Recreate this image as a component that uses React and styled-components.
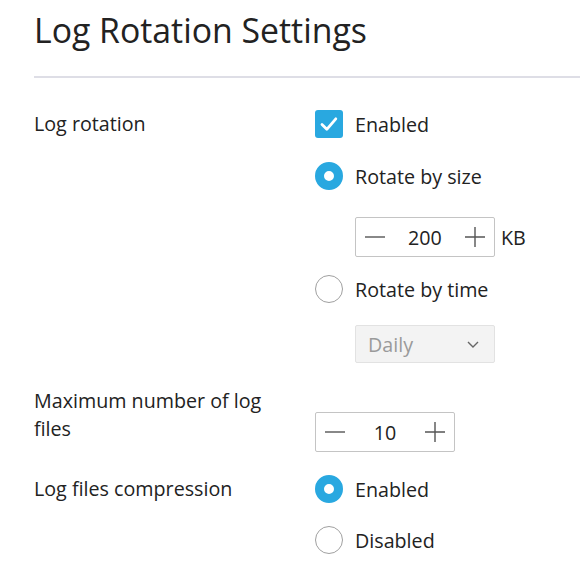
import React from 'react';
import styled, { createGlobalStyle } from 'styled-components';

const GlobalStyle = createGlobalStyle`
    body {
        margin: 0;
        background: #fff;
        font-family: "Open Sans", "Noto Sans", sans-serif;
        color: #222;
    }
`;

const Page = styled.div`
    padding: 10px 0 0 34px;
`;

const Title = styled.h1`
    margin: 0;
    font-size: 33.8px;
    line-height: 40px;
    font-weight: 400;
    color: #222;
`;

const Divider = styled.div`
    height: 2px;
    background: #dedee6;
    margin: 26px 0 32px;
`;

const Section = styled.div`
    display: flex;
    align-items: flex-start;
    margin-top: ${props => props.top || 0}px;
`;

const Label = styled.div`
    width: 262px;
    margin-right: 19px;
    font-size: 19.7px;
    line-height: 28px;
    flex-shrink: 0;
`;

const Options = styled.div`
    display: flex;
    flex-direction: column;
    padding-top: ${props => props.offset || 0}px;
`;

const Option = styled.div`
    display: flex;
    align-items: center;
    gap: 12px;
    height: 28px;
    font-size: 19.7px;
    margin-top: ${props => props.top || 0}px;
`;

const CheckBox = styled.span`
    width: 28px;
    height: 28px;
    border-radius: 3px;
    background: #29a8e0;
    display: flex;
    align-items: center;
    justify-content: center;
`;

const Radio = styled.span`
    box-sizing: border-box;
    width: 28px;
    height: 28px;
    border-radius: 50%;
    border: ${props => props.checked ? '9px solid #29a8e0' : '1.5px solid #a0a0a0'};
    background: #fff;
`;

const Indent = styled.div`
    display: flex;
    align-items: center;
    gap: 6px;
    margin: ${props => props.top || 0}px 0 0 ${props => props.left || 0}px;
    font-size: 19.7px;
`;

const Stepper = styled.div`
    box-sizing: border-box;
    width: 140px;
    height: 40px;
    border: 1px solid #c4c4c4;
    border-radius: 2px;
    display: flex;
    align-items: center;
    justify-content: space-between;
    padding: 0 8px;
    background: #fff;
`;

const StepValue = styled.span`
    font-size: 19.7px;
    color: #222;
`;

const Select = styled.div`
    box-sizing: border-box;
    width: 140px;
    height: 38px;
    border: 1px solid #e2e2e2;
    border-radius: 2px;
    background: #f3f3f3;
    display: flex;
    align-items: center;
    justify-content: space-between;
    padding: 0 15px 0 12px;
    font-size: 19.7px;
    color: #9a9a9a;
`;

const Minus = () => (
    <svg width="22" height="22" viewBox="0 0 22 22">
        <path d="M1 11h20" stroke="#555" strokeWidth="1.4" />
    </svg>
);

const Plus = () => (
    <svg width="22" height="22" viewBox="0 0 22 22">
        <path d="M1 11h20M11 1v20" stroke="#555" strokeWidth="1.4" />
    </svg>
);

const Check = () => (
    <svg width="20" height="20" viewBox="0 0 20 20">
        <path d="M3 10.5l4.8 4.8 9-10.5" fill="none" stroke="#fff" strokeWidth="2.8" strokeLinecap="round" strokeLinejoin="round" />
    </svg>
);

const Chevron = () => (
    <svg width="12" height="7" viewBox="0 0 12 7">
        <path d="M1 1l5 5 5-5" fill="none" stroke="#666" strokeWidth="1.4" />
    </svg>
);

const NumberInput = ({ value }) => (
    <Stepper>
        <Minus />
        <StepValue>{value}</StepValue>
        <Plus />
    </Stepper>
);

export default function App() {
    return (
        <Page>
            <GlobalStyle />
            <Title>Log Rotation Settings</Title>
            <Divider />

            <Section>
                <Label>Log rotation</Label>
                <Options>
                    <Option>
                        <CheckBox><Check /></CheckBox>
                        Enabled
                    </Option>
                    <Option top={24}>
                        <Radio checked />
                        Rotate by size
                    </Option>
                    <Indent top={27} left={40}>
                        <NumberInput value="200" />
                        KB
                    </Indent>
                    <Option top={18}>
                        <Radio />
                        Rotate by time
                    </Option>
                    <Indent top={22} left={40}>
                        <Select>
                            Daily
                            <Chevron />
                        </Select>
                    </Indent>
                </Options>
            </Section>

            <Section top={24}>
                <Label>Maximum number of log files</Label>
                <Options offset={25}>
                    <NumberInput value="10" />
                </Options>
            </Section>

            <Section top={23}>
                <Label>Log files compression</Label>
                <Options>
                    <Option>
                        <Radio checked />
                        Enabled
                    </Option>
                    <Option top={23}>
                        <Radio />
                        Disabled
                    </Option>
                </Options>
            </Section>
        </Page>
    );
}
